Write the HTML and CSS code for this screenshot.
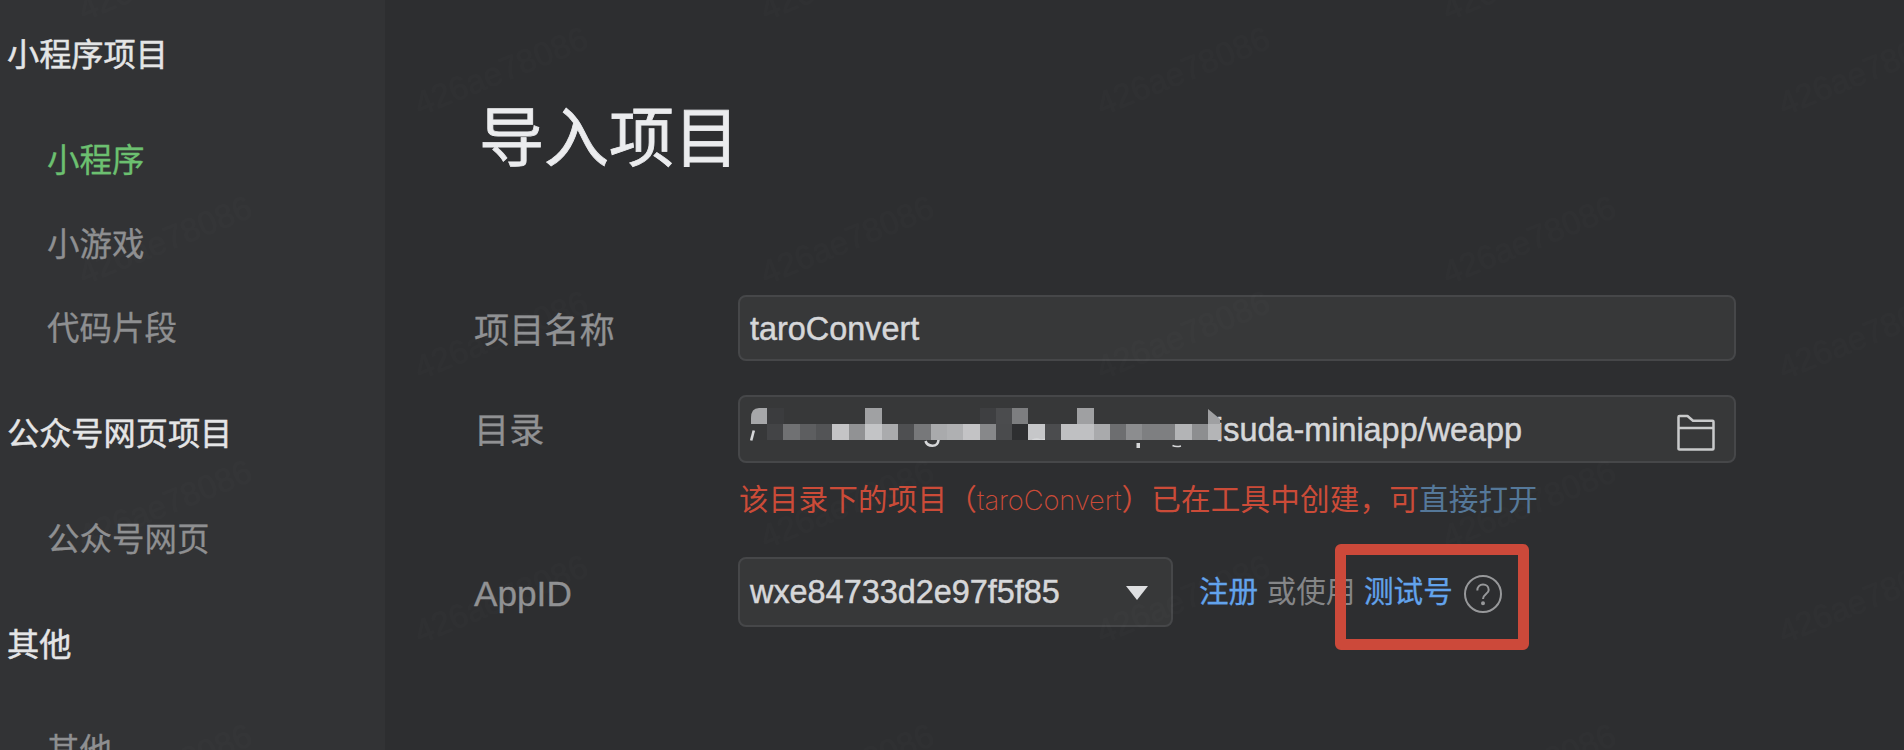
FILE: index.html
```html
<!DOCTYPE html>
<html lang="zh-CN">
<head>
<meta charset="utf-8">
<title>导入项目</title>
<link rel="stylesheet" href="styles.css">
</head>
<body>
<div class="app">
  <nav class="sidebar">
    <h2 class="group group-first">小程序项目</h2>
    <a class="item active">小程序</a>
    <a class="item">小游戏</a>
    <a class="item">代码片段</a>
    <h2 class="group">公众号网页项目</h2>
    <a class="item">公众号网页</a>
    <h2 class="group">其他</h2>
    <a class="item">其他</a>
  </nav>
  <main class="content">
    <h1 class="title">导入项目</h1>
    <div class="row row-name">
      <label class="label label-name">项目名称</label>
      <div class="field field-name"><span>taroConvert</span></div>
    </div>
    <div class="row row-dir">
      <label class="label label-dir">目录</label>
      <div class="field field-dir">
        <span class="path">isuda-miniapp/weapp</span>
        <svg class="mosaic" width="490" height="60" viewBox="0 0 490 60">
          <g shape-rendering="crispEdges">
            <path fill="#3b3c3e" d="M27 11h16.500v16H27z"/>
            <path fill="#a0a1a3" d="M125 11h16.500v16H125z"/>
            <path fill="#3e3f41" d="M240 11h16v16h-16z"/>
            <path fill="#4b4c4e" d="M256 11h16v16h-16z"/>
            <path fill="#7d7e80" d="M272 11h16v16h-16z"/>
            <path fill="#9fa0a2" d="M337 11h17v16h-17z"/>
            <path fill="#434446" d="M27 27h17v16H27z"/>
            <path fill="#707173" d="M43 27h17v16H43z"/>
            <path fill="#5d5e60" d="M60 27h16v16H60z"/>
            <path fill="#535456" d="M76 27h16v16H76z"/>
            <path fill="#c4c4c6" d="M92 27h17v16H92z"/>
            <path fill="#919294" d="M109 27h16v16h-16z"/>
            <path fill="#c3c4c6" d="M125 27h17v16h-17z"/>
            <path fill="#aaabad" d="M142 27h16v16h-16z"/>
            <path fill="#4e4f51" d="M158 27h16v16h-16z"/>
            <path fill="#77787a" d="M174 27h17v16h-17z"/>
            <path fill="#a9aaac" d="M191 27h16v16h-16z"/>
            <path fill="#afb0b2" d="M207 27h16v16h-16z"/>
            <path fill="#c3c3c5" d="M223 27h17v16h-17z"/>
            <path fill="#87888a" d="M240 27h16v16h-16z"/>
            <path fill="#4a4b4d" d="M256 27h16v16h-16z"/>
            <path fill="#2e2f31" d="M272 27h16v16h-16z"/>
            <path fill="#c6c7c9" d="M288 27h17v16h-17z"/>
            <path fill="#4b4c4e" d="M305 27h16v16h-16z"/>
            <path fill="#bfc0c2" d="M321 27h33v16h-33z"/>
            <path fill="#a9aaac" d="M354 27h16v16h-16z"/>
            <path fill="#6d6e70" d="M370 27h16v16h-16z"/>
            <path fill="#8c8d8f" d="M386 27h16v16h-16z"/>
            <path fill="#7e7f81" d="M402 27h33v16h-33z"/>
            <path fill="#b3b4b6" d="M435 27h17v16h-17z"/>
            <path fill="#8d8e90" d="M452 27h16v16h-16z"/>
          </g>
          <path fill="#a6a7a9" d="M11 27V21Q11 11 19 11H27V27Z"/>
          <path fill="#9fa0a2" d="M468 27V12L480 22V27Z"/>
          <path fill="#b4b5b7" d="M468 27H481V42Q480 43 478 43H468Z"/>
          <g fill="none" stroke="#d6d7d9" stroke-width="2.600">
            <path d="M11.200 43.500L13.800 33.500"/>
            <path d="M185.500 44Q187 48.700 192.500 48.700T198.500 43"/>
            <path d="M432.500 48.500Q436 50.300 441 49" stroke-width="1.600"/>
          </g>
          <path fill="#d6d7d9" d="M396.500 46h3.500v5h-3.500zM292 42.500Q297 40 301 42.500L305 41.500V43H292Z"/>
        </svg>
        <svg class="folder" width="38" height="37" viewBox="0 0 38 37" fill="none" stroke="#c9cacb" stroke-width="2.500" stroke-linejoin="round">
          <path d="M1.500 35.500V3Q1.500 2 2.500 2H10.500L16 6.700H35.500Q36.500 6.700 36.500 7.700V34.500Q36.500 35.500 35.500 35.500H2.500Q1.500 35.500 1.500 34.500M1.500 14H36.500"/>
        </svg>
      </div>
    </div>
    <p class="error">该目录下的项目（<span class="thin">taroConvert</span>）已在工具中创建，可<a class="open">直接打开</a></p>
    <div class="row row-app">
      <label class="label label-app">AppID</label>
      <div class="field field-app"><span>wxe84733d2e97f5f85</span><i class="caret"></i></div>
      <div class="links">
        <a class="link">注册</a><span class="or">或使用</span><a class="link">测试号</a>
        <svg class="help" width="40" height="40" viewBox="0 0 40 40" fill="none" stroke="#97989a" stroke-width="2">
          <circle cx="20" cy="20" r="18"/>
          <path d="M14.300 16.500C14.300 12.800 16.700 10.600 20 10.600S25.700 12.800 25.700 15.900C25.700 20 20 20.200 20 25"/>
          <circle cx="20" cy="29.300" r="1" fill="#97989a"/>
        </svg>
      </div>
    </div>
  </main>
  <svg class="watermark" width="1904" height="750">
    <defs>
      <pattern id="wm" width="682" height="264" patternUnits="userSpaceOnUse" patternTransform="translate(70 -80)">
        <text transform="translate(14 101) rotate(-22)">426ae78086</text>
        <text transform="translate(350 196) rotate(-22)">426ae78086</text>
      </pattern>
    </defs>
    <rect width="1904" height="750" fill="url(#wm)"/>
  </svg>
  <div class="highlight"></div>
</div>
</body>
</html>
```
FILE: styles.css
```css
* { box-sizing: border-box; }
body { margin: 0; background: #2d2e30; font-family: "Liberation Sans", "Noto Sans CJK SC", sans-serif; }
h1, h2, p { margin: 0; font-weight: 400; }
.app { position: relative; display: flex; width: 1904px; height: 750px; overflow: hidden; }
.sidebar { width: 385px; flex: none; background: #323335; font-size: 32.500px; }
.group { display: flex; align-items: center; height: 127px; padding-left: 7px; font-size: 32.200px; color: #e4e5e6; -webkit-text-stroke: 0.500px; }
.group-first { height: 110px; margin: -3px 0 8px; }
.item { display: flex; align-items: center; height: 84px; padding-left: 47px; color: #8e8f91; -webkit-text-stroke: 0.300px; }
.active { color: #6cc070; }
.content { flex: 1; padding-left: 89px; }
.title { height: 295px; padding: 106px 0 0 5px; font-size: 65px; line-height: 65px; color: #ebecee; -webkit-text-stroke: 0.800px; }
.row { display: flex; }
.label { width: 264px; flex: none; display: flex; align-items: center; font-size: 35.200px; color: #909193; -webkit-text-stroke: 0.300px; }
.label-name { padding-bottom: 2px; }
.label-dir { padding-bottom: 3px; }
.label-app { padding-top: 3px; }
.field { position: relative; display: flex; align-items: center; background: #373839; border: 2px solid #464749; border-radius: 8px; padding-left: 10px; font-size: 32.400px; color: #d6d7d9; -webkit-text-stroke: 0.500px; }
.field-name { width: 998px; height: 66px; padding-top: 3px; }
.row-dir { margin-top: 34px; }
.field-dir { width: 998px; height: 68px; padding-top: 2px; }
.field-app { width: 435px; height: 70px; padding-top: 1px; }
.mosaic { position: absolute; left: 0; top: 0; }
.path { margin-left: 466px; }
.folder { margin-left: auto; margin-right: 19px; position: relative; top: 2px; }
.error { height: 94px; padding: 19px 0 0 265px; font-size: 29.600px; line-height: 36px; color: #cb4b38; white-space: nowrap; letter-spacing: 0.150px; }
.thin { font-family: Inter, sans-serif; font-weight: 200; font-size: 27.300px; letter-spacing: -0.100px; }
.open { color: #557899; }
.links { display: flex; align-items: center; margin-left: 26px; font-size: 29.600px; line-height: 40px; gap: 8.500px; }
.link { color: #62a3ec; -webkit-text-stroke: 0.300px; }
.or { color: #858688; }
.help { position: relative; top: 2px; margin-left: 2px; }
.caret { margin-left: auto; margin-right: 23px; border: 11px solid transparent; border-top: 14px solid #dedfe1; border-bottom: 0; }
.watermark { position: absolute; left: 0; top: 0; font-size: 33px; pointer-events: none; }
.watermark text { fill: #fff; fill-opacity: 0.012; }
.highlight { position: absolute; left: 1335px; top: 544px; width: 194px; height: 106px; border: 11px solid #cc493a; border-radius: 6px; }
```
